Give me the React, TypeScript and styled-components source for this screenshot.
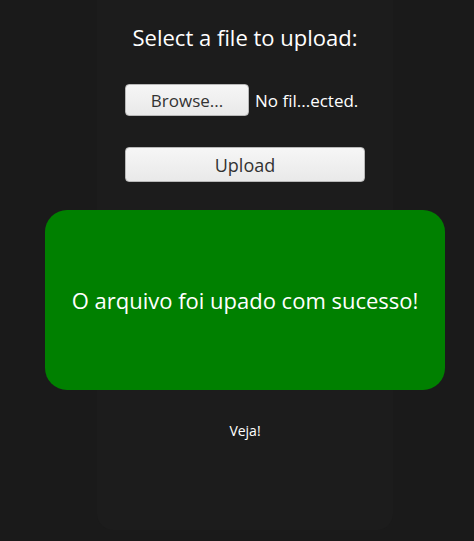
import React from "react";
import styled, { createGlobalStyle } from "styled-components";

const Global = createGlobalStyle`
  html, body {
    margin: 0;
    padding: 0;
    background: #1a1a1a;
    font-family: "Open Sans", "Noto Sans", sans-serif;
  }
`;

const Page = styled.div`
  display: flex;
  justify-content: center;
  padding-left: 16px;
  min-height: 541px;
  box-sizing: border-box;
`;

const Card = styled.main`
  width: 296px;
  height: 530px;
  background: #1c1c1c;
  border-radius: 0 0 16px 16px;
  display: flex;
  flex-direction: column;
  align-items: center;
  box-sizing: border-box;
  padding-top: 23px;
`;

const Title = styled.h1`
  margin: 0;
  font-size: 22px;
  font-weight: 400;
  color: #ffffff;
  line-height: 28px;
  white-space: nowrap;
`;

const FileRow = styled.div`
  margin-top: 33px;
  width: 240px;
  display: flex;
  align-items: center;
  gap: 6px;
`;

const Button = styled.button<{ $w: number; $h: number }>`
  width: ${(p) => p.$w}px;
  height: ${(p) => p.$h}px;
  box-sizing: border-box;
  border: 1px solid #b8b8b8;
  border-radius: 4px;
  background: linear-gradient(#f6f6f6, #e9e9e9);
  color: #333333;
  font-family: "Open Sans", "Noto Sans", sans-serif;
  font-size: 17px;
  padding: 0;
  line-height: 1;
  cursor: pointer;
`;

const FileLabel = styled.span`
  color: #ffffff;
  font-size: 17px;
  white-space: nowrap;
`;

const UploadButton = styled(Button)`
  margin-top: 31px;
  font-size: 18px;
`;

const Success = styled.div`
  margin-top: 28px;
  flex-shrink: 0;
  width: 400px;
  height: 180px;
  background: #008000;
  border-radius: 22px;
  display: flex;
  align-items: center;
  justify-content: center;
  color: #ffffff;
  font-size: 22px;
  white-space: nowrap;
`;

const Link = styled.a`
  margin-top: 31px;
  color: #ffffff;
  font-size: 14px;
  text-decoration: none;
`;

export default function App() {
  return (
    <>
      <Global />
      <Page>
        <Card>
          <Title>Select a file to upload:</Title>
          <FileRow>
            <Button $w={124} $h={32}>Browse...</Button>
            <FileLabel>No fil...ected.</FileLabel>
          </FileRow>
          <UploadButton $w={240} $h={35}>Upload</UploadButton>
          <Success>O arquivo foi upado com sucesso!</Success>
          <Link href="#">Veja!</Link>
        </Card>
      </Page>
    </>
  );
}
